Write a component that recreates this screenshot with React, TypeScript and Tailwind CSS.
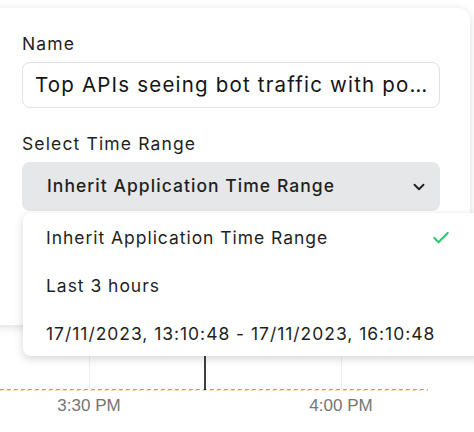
import React from 'react';
import { Check, ChevronDown } from 'lucide-react';

const options = [
    'Inherit Application Time Range',
    'Last 3 hours',
    '17/11/2023, 13:10:48 - 17/11/2023, 16:10:48',
];

// Chart behind the popover: two grid lines, a dotted series line and the cursor.
const ChartBackdrop: React.FC = () => (
    <svg width="474" height="432" className="block">
        <line x1="89.5" y1="320" x2="89.5" y2="390" stroke="#eeeeee" strokeWidth="1" />
        <line x1="341.5" y1="320" x2="341.5" y2="390" stroke="#eeeeee" strokeWidth="1" />
        <line x1="0" y1="389.5" x2="428" y2="389.5" stroke="#6fbcb3" strokeWidth="1" strokeDasharray="4 3" />
        <line x1="0" y1="390.5" x2="428" y2="390.5" stroke="#efe3a6" strokeWidth="1" strokeDasharray="4 3" strokeDashoffset="1" />
        <line x1="205" y1="330" x2="205" y2="390" stroke="#111111" strokeWidth="1.6" />
        <text x="89" y="411" textAnchor="middle" fill="#757575" fontSize="17" fontFamily="'Liberation Sans', Arial, sans-serif">3:30 PM</text>
        <text x="341" y="411" textAnchor="middle" fill="#757575" fontSize="17" fontFamily="'Liberation Sans', Arial, sans-serif">4:00 PM</text>
    </svg>
);

const App: React.FC = () => {
    const selected = options[0];

    return (
        <div className="relative h-[432px] w-[474px] overflow-hidden bg-white font-['Inter','Noto_Sans',sans-serif] text-[#1f1f1f]">
            <ChartBackdrop />

            {/* Widget settings popover */}
            <div className="absolute left-[-10px] top-2 h-[317px] w-[480px] rounded-xl bg-white pl-[32px] pr-[30px] pt-6 shadow-[0_2px_10px_rgba(0,0,0,0.14)]">
                <label className="block text-[17.5px] leading-6 tracking-[0.065em] text-[#1f1f1f]">Name</label>
                <div className="mt-1.5 flex h-[46px] items-center rounded-lg border border-[#e2e2e2] bg-white pl-[12px] pr-[8px]">
                    <span className="truncate text-[20.5px] leading-6 tracking-[0.058em] text-[#141414]">
                        Top APIs seeing bot traffic with potential account takeover attempts
                    </span>
                </div>

                <label className="mt-6 block text-[17.5px] leading-6 tracking-[0.065em] text-[#1f1f1f]">Select Time Range</label>
                <button className="mt-1.5 flex h-[49px] w-full items-center justify-between rounded-lg bg-[#e5e7e8] pl-[25px] pr-[12px]">
                    <span className="text-[17.5px] font-medium tracking-[0.06em] text-[#1f1f1f]">{selected}</span>
                    <ChevronDown className="h-[18px] w-[18px] text-[#222]" strokeWidth={2.5} />
                </button>
            </div>

            {/* Open dropdown menu */}
            <div className="absolute left-[23px] top-[213px] h-[143px] w-[460px] overflow-hidden rounded-lg bg-white pt-px shadow-[0_3px_10px_rgba(0,0,0,0.16)]">
                {options.map((opt) => (
                    <div key={opt} className="flex h-12 items-center justify-between pl-[23px] pr-[32px]">
                        <span className="whitespace-nowrap text-[17.5px] tracking-[0.055em] text-[#1f1f1f]">{opt}</span>
                        {opt === selected && <Check className="h-5 w-5 text-[#2ecc71]" strokeWidth={2.6} />}
                    </div>
                ))}
            </div>
        </div>
    );
};

export default App;
